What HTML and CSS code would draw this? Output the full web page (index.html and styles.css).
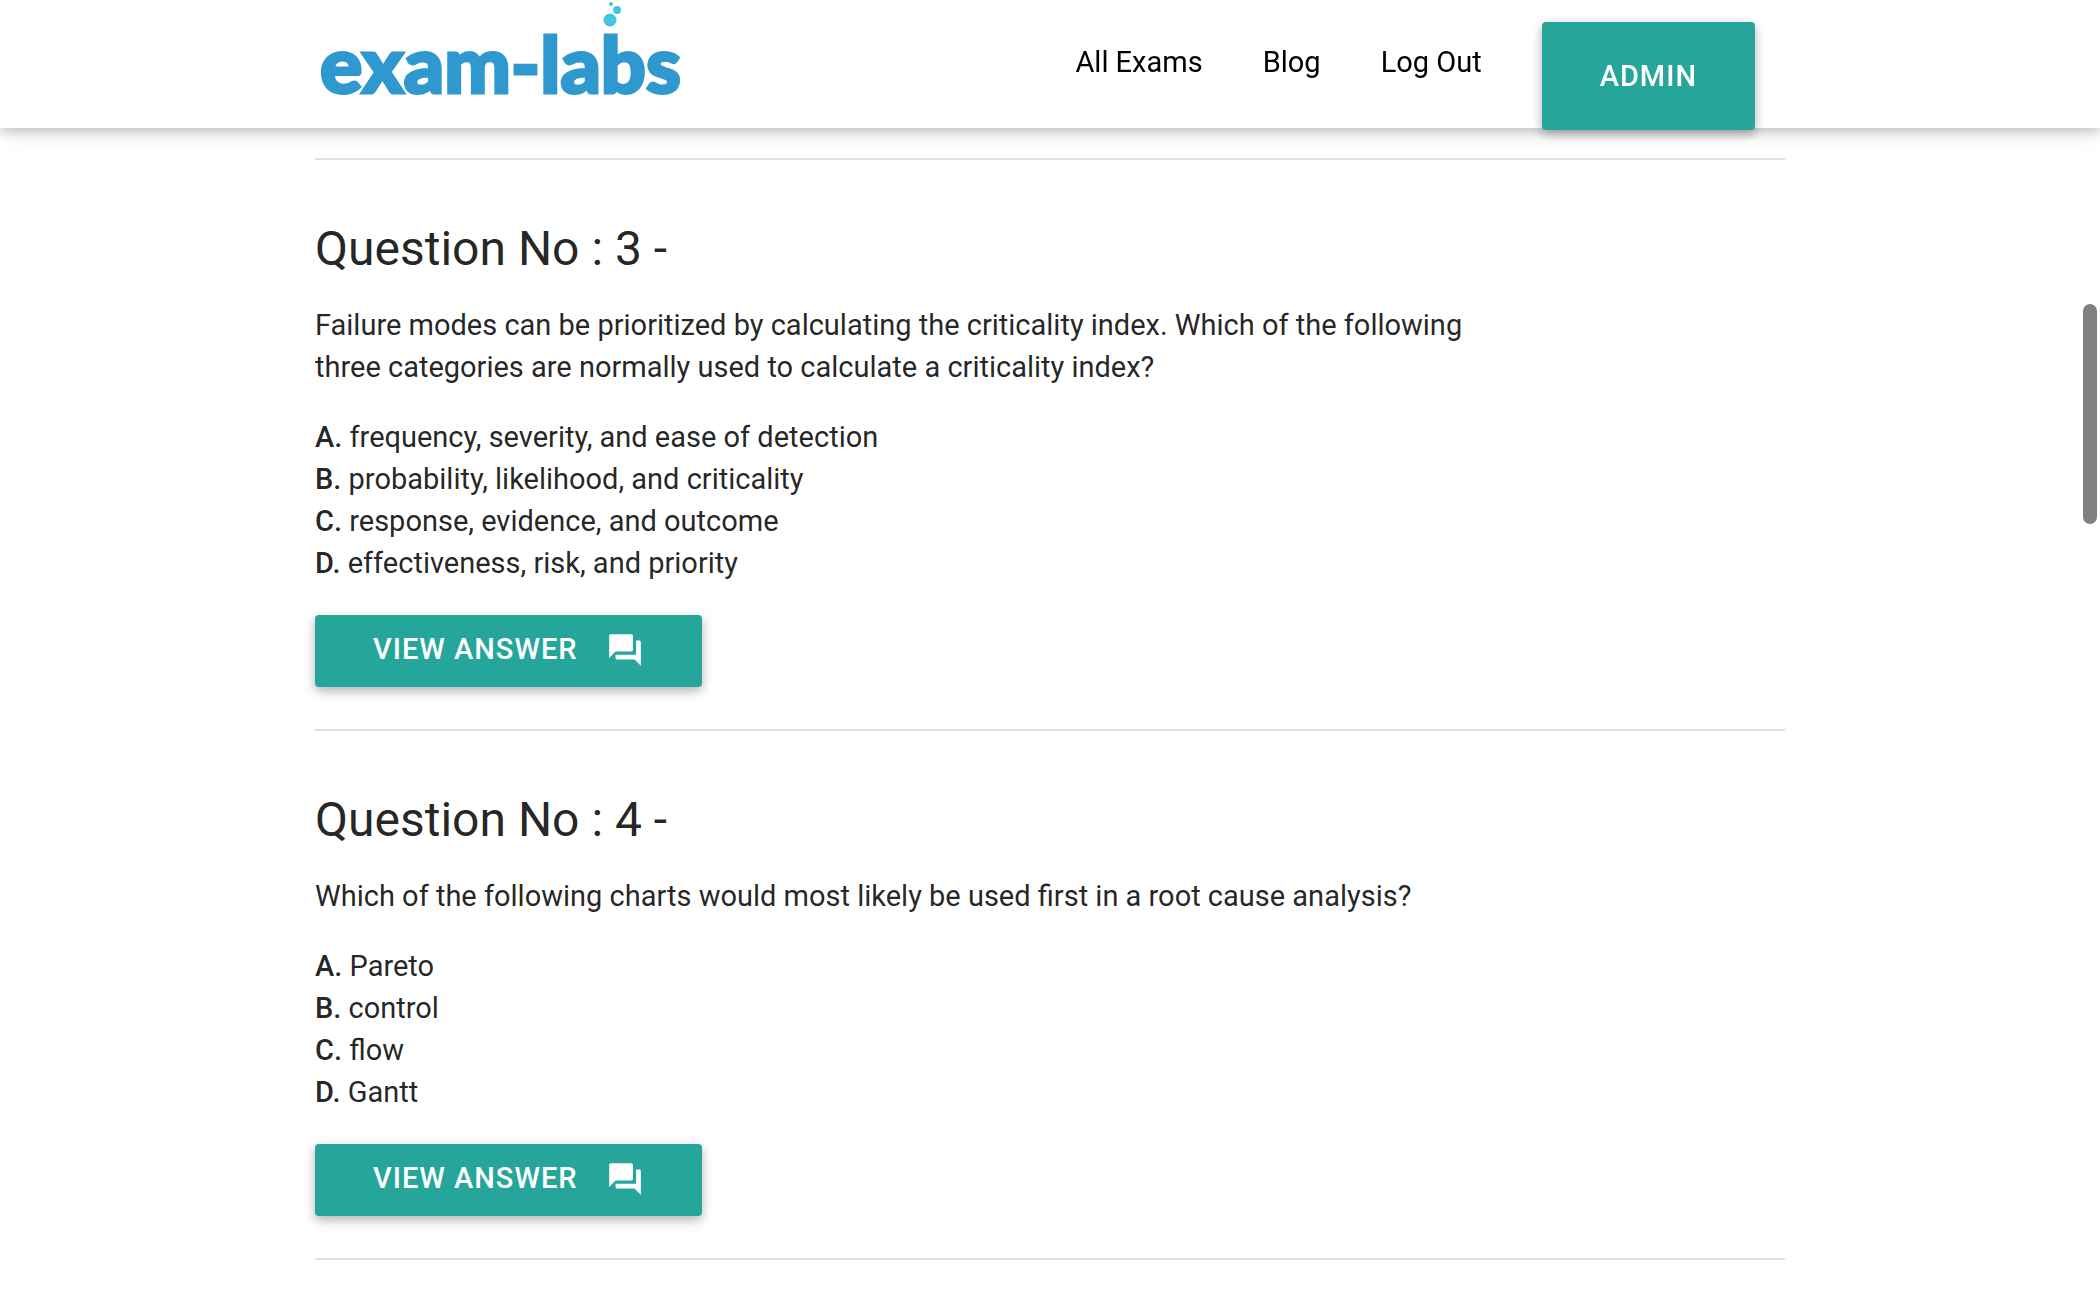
FILE: index.html
```html
<!DOCTYPE html>
<html lang="en">
<head>
    <meta charset="UTF-8">
    <meta name="viewport" content="width=device-width, initial-scale=1.0">
    <title>exam-labs</title>
    <link rel="stylesheet" href="styles.css">
</head>
<body>
    <header class="navbar">
        <div class="container nav-wrapper">
            <a href="#" class="brand">exam-la<span class="brand-b">b<svg class="bubbles" viewBox="0 0 20 26" aria-hidden="true">
                <circle cx="7" cy="18" r="6.5"/>
                <circle cx="14" cy="8" r="4"/>
                <circle cx="8" cy="2" r="2"/>
            </svg></span>s</a>
            <nav class="nav-links">
                <a href="#">All Exams</a>
                <a href="#">Blog</a>
                <a href="#">Log Out</a>
                <button type="button" class="btn btn-admin">Admin</button>
            </nav>
        </div>
    </header>

    <main class="container">
        <!-- Question 3 -->
        <section class="question">
            <h2>Question No : 3 -</h2>
            <p>Failure modes can be prioritized by calculating the criticality index. Which of the following three categories are normally used to calculate a criticality index?</p>
            <p>
                <b>A.</b> frequency, severity, and ease of detection<br>
                <b>B.</b> probability, likelihood, and criticality<br>
                <b>C.</b> response, evidence, and outcome<br>
                <b>D.</b> effectiveness, risk, and priority
            </p>
            <button type="button" class="btn btn-answer">
                View Answer
                <svg class="icon" viewBox="0 0 24 24" aria-hidden="true"><path d="M21 6h-2v9H6v2c0 .55.45 1 1 1h11l4 4V7c0-.55-.45-1-1-1zm-4 6V3c0-.55-.45-1-1-1H3c-.55 0-1 .45-1 1v14l4-4h10c.55 0 1-.45 1-1z"/></svg>
            </button>
        </section>

        <!-- Question 4 -->
        <section class="question">
            <h2>Question No : 4 -</h2>
            <p>Which of the following charts would most likely be used first in a root cause analysis?</p>
            <p>
                <b>A.</b> Pareto<br>
                <b>B.</b> control<br>
                <b>C.</b> flow<br>
                <b>D.</b> Gantt
            </p>
            <button type="button" class="btn btn-answer">
                View Answer
                <svg class="icon" viewBox="0 0 24 24" aria-hidden="true"><path d="M21 6h-2v9H6v2c0 .55.45 1 1 1h11l4 4V7c0-.55-.45-1-1-1zm-4 6V3c0-.55-.45-1-1-1H3c-.55 0-1 .45-1 1v14l4-4h10c.55 0 1-.45 1-1z"/></svg>
            </button>
        </section>
    </main>

    <div class="scroll-thumb"></div>
</body>
</html>
```
FILE: styles.css
```css
* {
    box-sizing: border-box;
}
body {
    margin: 0;
    background-color: #fff;
    color: rgba(0, 0, 0, 0.87);
    font-family: Roboto, sans-serif;
    font-size: 29px;
    line-height: 42px;
}
.container {
    width: 70%;
    margin: 0 auto;
}
.navbar {
    position: fixed;
    top: 0;
    left: 0;
    right: 0;
    z-index: 10;
    height: 128px;
    background-color: #fff;
    box-shadow: 0 4px 10px 0 rgba(0, 0, 0, 0.16), 0 4px 20px 0 rgba(0, 0, 0, 0.12);
}
.nav-wrapper {
    display: flex;
    justify-content: space-between;
    align-items: flex-start;
    padding-right: 30px;
}
.brand {
    padding-left: 5px;
    color: #2f99cf;
    font-family: Lato, sans-serif;
    font-size: 79px;
    font-weight: 900;
    line-height: 126px;
    text-decoration: none;
    -webkit-text-stroke: 3px #2f99cf;
}
.brand-b {
    position: relative;
}
.bubbles {
    position: absolute;
    top: -13px;
    left: 2px;
    width: 20px;
    height: 26px;
    fill: #45c4e4;
}
.nav-links {
    display: flex;
    align-items: flex-start;
}
.nav-links a {
    padding: 0 30px;
    color: #000;
    line-height: 124px;
    text-decoration: none;
}
.btn {
    display: flex;
    align-items: center;
    height: 72px;
    padding: 0 58px;
    border: none;
    border-radius: 4px;
    background-color: #26a69a;
    box-shadow: 0 4px 10px 0 rgba(0, 0, 0, 0.2), 0 4px 16px 0 rgba(0, 0, 0, 0.12);
    color: #fff;
    font-family: inherit;
    font-size: 29px;
    font-weight: 500;
    letter-spacing: 1px;
    text-transform: uppercase;
    cursor: pointer;
}
.btn:hover {
    background-color: #2bbbad;
}
.btn-answer {
    gap: 28px;
    padding-bottom: 4px;
}
.btn-admin {
    height: 108px;
    margin: 22px 0 0 30px;
}
.icon {
    width: 38px;
    height: 38px;
    margin-top: 2px;
    fill: #fff;
}
main {
    padding-top: 158px;
}
.question {
    padding: 59px 0 42px;
    border-top: 2px solid #e0e0e0;
}
.question:last-child {
    border-bottom: 2px solid #e0e0e0;
}
h2 {
    margin: 0 0 25px;
    font-size: 48px;
    font-weight: 400;
    line-height: 60px;
}
p {
    max-width: 82%;
    margin: 0 0 28px;
}
p + .btn {
    margin-top: 31px;
}
b {
    font-weight: 500;
}
.scroll-thumb {
    position: fixed;
    top: 304px;
    right: 3px;
    width: 14px;
    height: 220px;
    border-radius: 7px;
    background-color: #808080;
}
```
